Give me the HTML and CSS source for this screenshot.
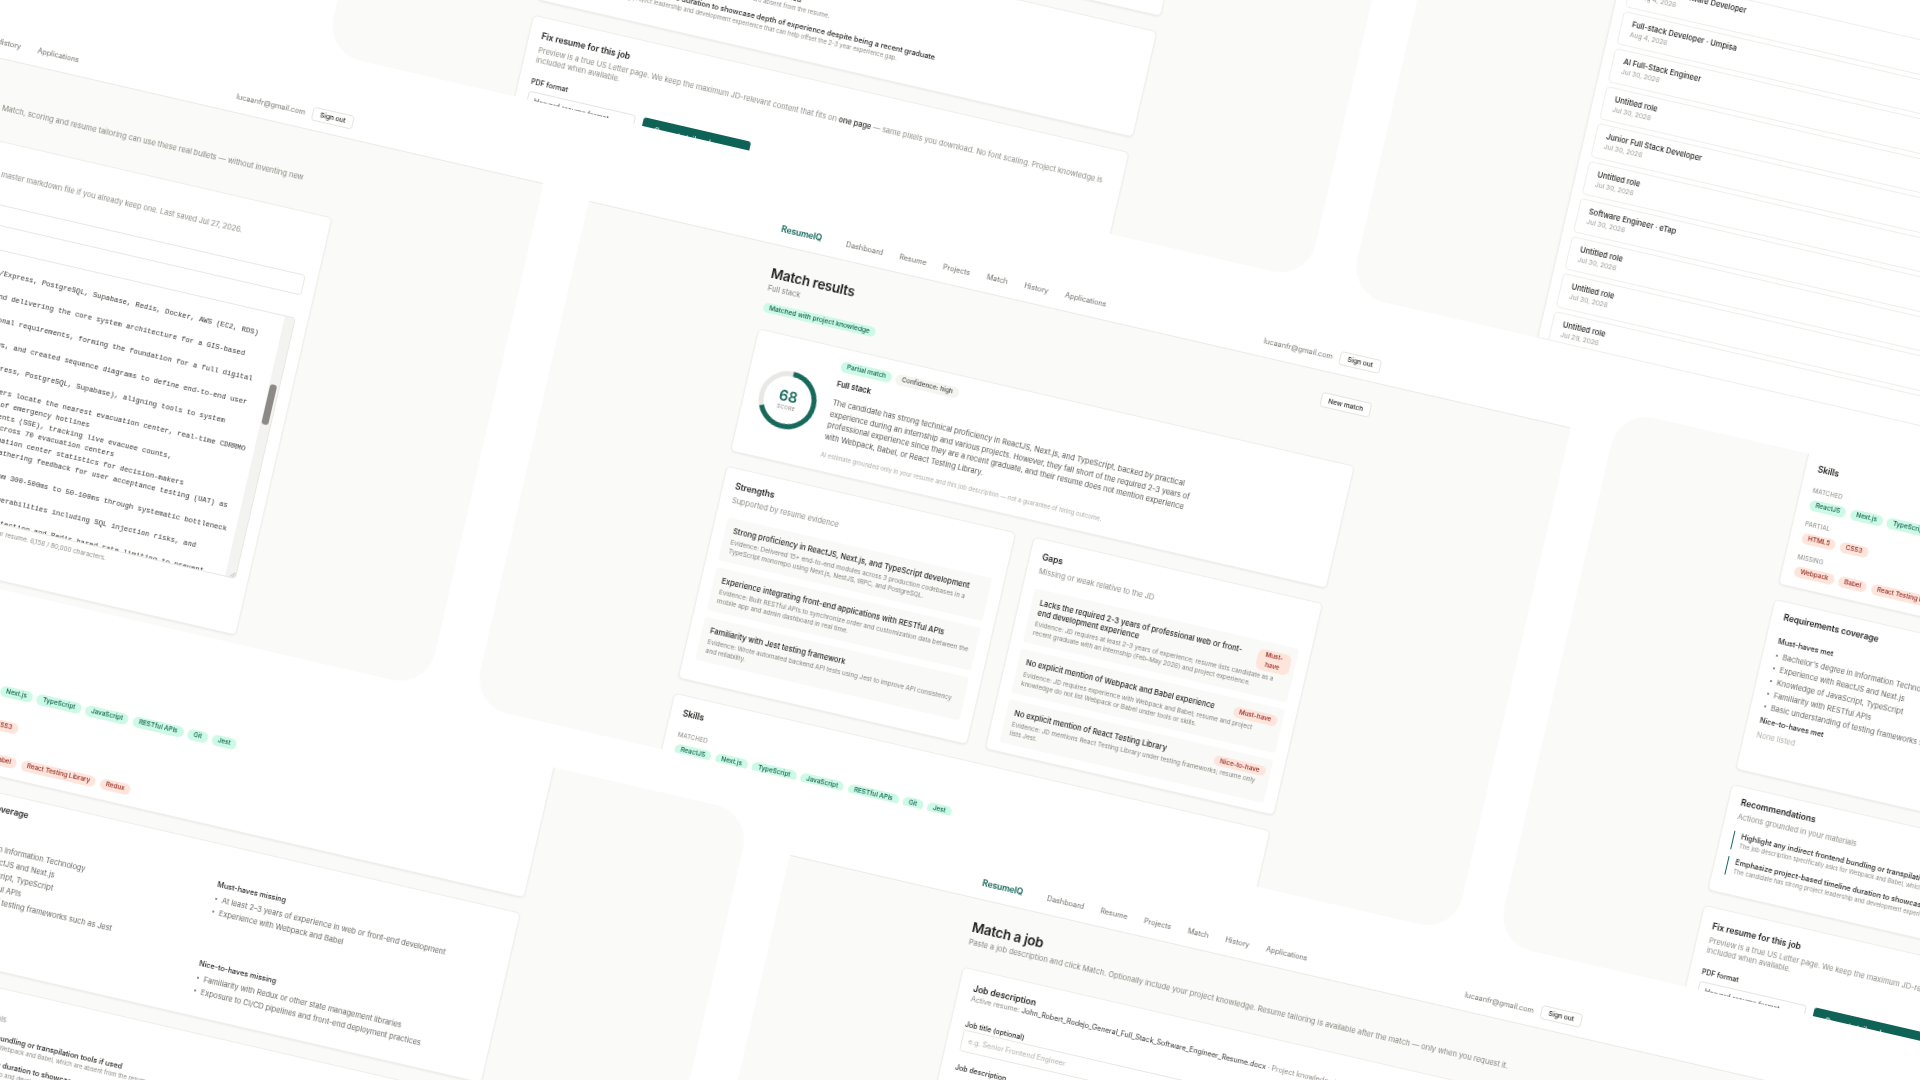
FILE: index.html
```html
<!DOCTYPE html>
<html lang="en">
<head>
  <meta charset="UTF-8">
  <meta name="viewport" content="width=device-width, initial-scale=1.0">
  <title>ResumeIQ</title>
  <link rel="stylesheet" href="styles.css">
</head>
<body>
  <div class="stage">

    <!-- Match results, top of page -->
    <section class="tile tile-center">
      <header class="topbar">
        <div class="container topbar-row">
          <span class="logo">ResumeIQ</span>
          <nav class="nav"><a>Dashboard</a><a>Resume</a><a>Projects</a><a>Match</a><a>History</a><a>Applications</a></nav>
          <span class="email">lucaanfr@gmail.com</span>
          <button class="btn">Sign out</button>
        </div>
      </header>
      <main class="container page" id="match-page">
        <div class="page-head">
          <div>
            <h1>Match results</h1>
            <p class="sub">Full stack</p>
            <span class="pill pill-green pill-wide">Matched with project knowledge</span>
          </div>
          <button class="btn btn-new">New match</button>
        </div>

        <div class="card score-card">
          <div class="ring">
            <svg width="59" height="59" viewBox="0 0 59 59">
              <circle cx="29.5" cy="29.5" r="26.5" fill="none" stroke="#e8e8e6" stroke-width="5"/>
              <circle cx="29.5" cy="29.5" r="26.5" fill="none" stroke="#17695c" stroke-width="5" stroke-dasharray="113.2 166.5" transform="rotate(-90 29.5 29.5)"/>
            </svg>
            <div class="ring-label"><strong>68</strong><span>SCORE</span></div>
          </div>
          <div class="score-body">
            <div class="pill-row">
              <span class="pill pill-green">Partial match</span>
              <span class="pill pill-gray">Confidence: high</span>
            </div>
            <h3 class="score-role">Full stack</h3>
            <p class="summary">The candidate has strong technical proficiency in ReactJS, Next.js, and TypeScript, backed by practical experience during an internship and various projects. However, they fall short of the required 2-3 years of professional experience since they are a recent graduate, and their resume does not mention experience with Webpack, Babel, or React Testing Library.</p>
            <p class="disclaimer">AI estimate grounded only in your resume and this job description — not a guarantee of hiring outcome.</p>
          </div>
        </div>

        <div class="two-col">
          <div class="card col-card">
            <h2>Strengths</h2>
            <p class="card-sub">Supported by resume evidence</p>
            <div class="items">
              <div class="item">
                <div class="item-head"><h4>Strong proficiency in ReactJS, Next.js, and TypeScript development</h4></div>
                <p>Evidence: Delivered 15+ end-to-end modules across 3 production codebases in a TypeScript monorepo using Next.js, NestJS, tRPC, and PostgreSQL.</p>
              </div>
              <div class="item">
                <div class="item-head"><h4>Experience integrating front-end applications with RESTful APIs</h4></div>
                <p>Evidence: Built RESTful APIs to synchronize order and customization data between the mobile app and admin dashboard in real time.</p>
              </div>
              <div class="item">
                <div class="item-head"><h4>Familiarity with Jest testing framework</h4></div>
                <p>Evidence: Wrote automated backend API tests using Jest to improve API consistency and reliability.</p>
              </div>
            </div>
          </div>
          <div class="card col-card">
            <h2>Gaps</h2>
            <p class="card-sub">Missing or weak relative to the JD</p>
            <div class="items">
              <div class="item">
                <div class="item-head">
                  <h4>Lacks the required 2-3 years of professional web or front-end development experience</h4>
                  <span class="pill pill-red pill-wrap">Must-have</span>
                </div>
                <p>Evidence: JD requires at least 2–3 years of experience; resume lists candidate as a recent graduate with an internship (Feb–May 2026) and project experience.</p>
              </div>
              <div class="item">
                <div class="item-head">
                  <h4>No explicit mention of Webpack and Babel experience</h4>
                  <span class="pill pill-red">Must-have</span>
                </div>
                <p>Evidence: JD requires experience with Webpack and Babel; resume and project knowledge do not list Webpack or Babel under tools or skills.</p>
              </div>
              <div class="item">
                <div class="item-head">
                  <h4>No explicit mention of React Testing Library</h4>
                  <span class="pill pill-red">Nice-to-have</span>
                </div>
                <p>Evidence: JD mentions React Testing Library under testing frameworks; resume only lists Jest.</p>
              </div>
            </div>
          </div>
        </div>

        <div class="card skills-card">
          <h2>Skills</h2>
          <div class="skill-label">MATCHED</div>
          <div class="pill-row">
            <span class="pill pill-green">ReactJS</span><span class="pill pill-green">Next.js</span><span class="pill pill-green">TypeScript</span><span class="pill pill-green">JavaScript</span><span class="pill pill-green">RESTful APIs</span><span class="pill pill-green">Git</span><span class="pill pill-green">Jest</span>
          </div>
          <div class="skill-label">PARTIAL</div>
          <div class="pill-row">
            <span class="pill pill-red">HTML5</span><span class="pill pill-red">CSS3</span>
          </div>
          <div class="skill-label">MISSING</div>
          <div class="pill-row">
            <span class="pill pill-red">Webpack</span><span class="pill pill-red">Babel</span><span class="pill pill-red">React Testing Library</span><span class="pill pill-red">Redux</span>
          </div>
        </div>

        <div class="card req-card">
          <h2>Requirements coverage</h2>
          <div class="req-grid">
            <div>
              <h4>Must-haves met</h4>
              <ul>
                <li>Bachelor's degree in Information Technology</li>
                <li>Experience with ReactJS and Next.js</li>
                <li>Knowledge of JavaScript, TypeScript</li>
                <li>Familiarity with RESTful APIs</li>
                <li>Basic understanding of testing frameworks such as Jest</li>
              </ul>
            </div>
            <div>
              <h4>Must-haves missing</h4>
              <ul>
                <li>At least 2–3 years of experience in web or front-end development</li>
                <li>Experience with Webpack and Babel</li>
              </ul>
            </div>
            <div>
              <h4>Nice-to-haves met</h4>
              <p class="none">None listed</p>
            </div>
            <div>
              <h4>Nice-to-haves missing</h4>
              <ul>
                <li>Familiarity with Redux or other state management libraries</li>
                <li>Exposure to CI/CD pipelines and front-end deployment practices</li>
              </ul>
            </div>
          </div>
        </div>

        <div class="card rec-card">
          <h2>Recommendations</h2>
          <p class="card-sub">Actions grounded in your materials</p>
          <div class="rec">
            <h4>Highlight any indirect frontend bundling or transpilation tools if used</h4>
            <p>The job description specifically asks for Webpack and Babel, which are absent from the resume.</p>
          </div>
          <div class="rec">
            <h4>Emphasize project-based timeline duration to showcase depth of experience despite being a recent graduate</h4>
            <p>The candidate has strong project leadership and development experience that can help offset the 2-3 year experience gap.</p>
          </div>
        </div>

        <div class="card fix-card">
          <h2>Fix resume for this job</h2>
          <p class="card-sub fix-desc">Preview is a true US Letter page. We keep the maximum JD-relevant content that fits on <b>one page</b> — same pixels you download. No font scaling. Project knowledge is included when available.</p>
          <label class="field-label fix-label">PDF format</label>
          <div class="fix-row">
            <div class="select">Harvard resume format
              <svg width="6" height="6" viewBox="0 0 6 6"><path d="M1 2l2 2 2-2" fill="none" stroke="#555" stroke-width=".8"/></svg>
            </div>
            <button class="btn-primary">Generate tailored resume</button>
          </div>
        </div>
      </main>
    </section>

    <!-- same page, scrolled down -->
    <section class="tile tile-scrolled tile-top" data-copy></section>
    <section class="tile tile-scrolled tile-right" data-copy></section>
    <section class="tile tile-scrolled tile-lower-left" data-copy></section>

    <!-- Resume -->
    <section class="tile tile-left">
      <header class="topbar">
        <div class="container topbar-row">
          <span class="logo">ResumeIQ</span>
          <nav class="nav"><a>Dashboard</a><a>Resume</a><a>Projects</a><a>Match</a><a>History</a><a>Applications</a></nav>
          <span class="email">lucaanfr@gmail.com</span>
          <button class="btn">Sign out</button>
        </div>
      </header>
      <main class="container page">
        <h1>Resume</h1>
        <p class="sub resume-sub">Keep your full work history, projects and wins in one place so when you run Match, scoring and resume tailoring can use these real bullets — without inventing new experience.</p>
        <div class="card resume-card">
          <h2>Master resume</h2>
          <p class="card-sub">Paste your full resume as plain text below, or upload it. You can also paste a master markdown file if you already keep one. Last saved Jul 27, 2026.</p>
          <div class="input input-name"></div>
          <div class="editor">
<pre class="editor-text">

Tech Stack: TypeScript, JavaScript, Next.js, React, NestJS, Node/Express, PostgreSQL, Supabase, Redis, Docker, AWS (EC2, RDS)

Led the technical direction of a capstone team, while designing and delivering the core system architecture for a GIS-based

Conducted stakeholder interviews to gather and document the functional requirements, forming the foundation for a full digital

Designed the database schemas, mapped the use cases and process flows, and created sequence diagrams to define end-to-end user

Selected the technology stack (TypeScript, Next.js, NestJS, Node, Express, PostgreSQL, Supabase), aligning tools to system

Built location-based features with Mapbox, helping residents and officers locate the nearest evacuation center, real-time CDRRMO
alerts, and a searchable directory that lists the many different types of emergency hotlines
Implemented a live, real-time monitoring dashboard using Server-Sent Events (SSE), tracking live evacuee counts,
supply levels, resident check-ins, and the capacity usage in real time across 70 evacuation centers
Created an analytics page with charts that visualize population and evacuation center statistics for decision-makers
Demonstrated working builds to the barangay officials each sprint while gathering feedback for user acceptance testing (UAT) as

Reduced the average response time of the heaviest API endpoints by far, from 300-500ms to 50-100ms through systematic bottleneck

Performed a full security audit of the platform and remediated critical vulnerabilities including SQL injection risks, and

Added server input validation, parameterized queries, strict CSRF and XSS protection and Redis-based rate limiting to prevent</pre>
            <div class="scrollbar"><div class="thumb"></div></div>
            <svg class="grip" width="6" height="6" viewBox="0 0 6 6"><path d="M1 5.5L5.5 1M3.5 5.5L5.5 3.5" stroke="#888" stroke-width=".6"/></svg>
          </div>
          <p class="hint">Everything saved here is the source of truth for matching and tailoring, and nothing is invented beyond what is in your resume. 6,156 / 80,000 characters.</p>
        </div>
      </main>
    </section>

    <!-- Match a job -->
    <section class="tile tile-lower">
      <header class="topbar">
        <div class="container topbar-row">
          <span class="logo">ResumeIQ</span>
          <nav class="nav"><a>Dashboard</a><a>Resume</a><a>Projects</a><a>Match</a><a>History</a><a>Applications</a></nav>
          <span class="email">lucaanfr@gmail.com</span>
          <button class="btn">Sign out</button>
        </div>
      </header>
      <main class="container page">
        <h1>Match a job</h1>
        <p class="sub">Paste a job description and click Match. Optionally include your project knowledge. Resume tailoring is available after the match — only when you request it.</p>
        <div class="card job-card">
          <h2>Job description</h2>
          <p class="active-resume">Active resume: <span>John_Robert_Rodejo_General_Full_Stack_Software_Engineer_Resume.docx</span> · Project knowledge included</p>
          <label class="field-label job-label">Job title (optional)</label>
          <div class="input job-input">e.g. Senior Frontend Engineer</div>
          <label class="field-label">Job description</label>
        </div>
      </main>
    </section>

    <!-- History -->
    <section class="tile tile-history">
      <div class="card history-card">
        <div class="history-row"><b>Associate Software Developer</b><span>Aug 4, 2026</span></div>
        <div class="history-row"><b>Full-stack Developer · Umpisa</b><span>Aug 4, 2026</span></div>
        <div class="history-row"><b>AI Full-Stack Engineer</b><span>Jul 30, 2026</span></div>
        <div class="history-row"><b>Untitled role</b><span>Jul 30, 2026</span></div>
        <div class="history-row"><b>Junior Full Stack Developer</b><span>Jul 30, 2026</span></div>
        <div class="history-row"><b>Untitled role</b><span>Jul 30, 2026</span></div>
        <div class="history-row"><b>Software Engineer · eTap</b><span>Jul 30, 2026</span></div>
        <div class="history-row"><b>Untitled role</b><span>Jul 30, 2026</span></div>
        <div class="history-row"><b>Untitled role</b><span>Jul 30, 2026</span></div>
        <div class="history-row"><b>Untitled role</b><span>Jul 29, 2026</span></div>
      </div>
    </section>
  </div>

  <script src="script.js"></script>
</body>
</html>
```

FILE: styles.css
```css
* {
  box-sizing: border-box;
}

html, body {
  margin: 0;
  height: 100%;
}

body {
  width: 1920px;
  height: 1080px;
  overflow: hidden;
  position: relative;
  background-color: #fff;
  font-family: Inter, "Liberation Sans", sans-serif;
  color: #1c1c1a;
}

h1, h2, h3, h4, p, ul {
  margin: 0;
  padding: 0;
}

button {
  font-family: inherit;
}

/* the whole collage is one tilted canvas, origin at the middle of the window */
.stage {
  position: absolute;
  left: 960px;
  top: 540px;
  width: 0;
  height: 0;
  transform: rotate(13deg);
  filter: blur(0.3px);
}

.tile {
  position: absolute;
  width: 1008px;
  height: 547px;
  overflow: hidden;
  border-radius: 36px;
  background-color: #fafaf8;
}

.tile-center { left: -438px; top: -276px; }
.tile-top { left: -728px; top: -879px; }
.tile-right { left: 613px; top: -275px; }
.tile-lower-left { left: -1150px; top: 313px; }
.tile-left { left: -1494px; top: -283px; }
.tile-lower { left: -95px; top: 316px; }
.tile-history { left: 324px; top: -874px; }

.tile-scrolled .page {
  margin-top: -464px;
}

.topbar {
  height: 30px;
  background-color: #fff;
  border-bottom: 1px solid #eceae5;
}

.container {
  width: 612px;
  margin-left: 194px;
}

.topbar-row {
  height: 100%;
  display: flex;
  align-items: center;
  width: 615px;
  padding-bottom: 3px;
}

.logo {
  font-size: 8.6px;
  font-weight: 600;
  color: #0f6256;
  margin-right: 25px;
  letter-spacing: -0.1px;
}

.nav {
  display: flex;
  gap: 17px;
  font-size: 7.3px;
  color: #6f6e69;
  flex: 1;
}

.email {
  font-size: 7.3px;
  color: #77766f;
  margin-right: 7px;
}

.btn {
  height: 14px;
  width: 42px;
  padding: 0;
  background-color: #fff;
  border: 1px solid #e6e4df;
  border-radius: 3px;
  font-size: 6.6px;
  font-weight: 500;
  color: #262624;
}

.btn-new {
  width: 51px;
  height: 15px;
  margin-top: 1px;
  margin-right: -3px;
}

.page {
  padding-top: 19px;
}

.page-head {
  display: flex;
  justify-content: space-between;
  align-items: flex-start;
  height: 66px;
}

h1 {
  font-size: 13.4px;
  line-height: 18px;
  font-weight: 600;
  letter-spacing: -0.2px;
  color: #1c1c1a;
}

.sub {
  font-size: 7.5px;
  line-height: 11px;
  color: #85847e;
  margin-top: 1px;
}

.pill {
  display: inline-block;
  font-size: 6.4px;
  line-height: 10.5px;
  font-weight: 500;
  padding: 0 6px;
  border-radius: 6px;
  white-space: nowrap;
  flex: none;
}

.pill-wide {
  margin-top: 6px;
  font-size: 6.6px;
  line-height: 10px;
}

.pill-green {
  background-color: #ccfae6;
  color: #0d5c4d;
}

.pill-red {
  background-color: #fde5dc;
  color: #95261f;
}

.pill-gray {
  background-color: #f4f4f1;
  color: #4c4b47;
}

.pill-wrap {
  white-space: normal;
  width: 34px;
  line-height: 9.5px;
  padding: 1px 6px;
  text-align: center;
}

.pill-row {
  display: flex;
  flex-wrap: wrap;
  gap: 4.4px;
}

.card {
  background-color: #fff;
  border: 1px solid #f0eeea;
  border-radius: 5px;
  box-shadow: 0 1px 2px rgba(40, 40, 30, 0.07);
}

.score-card {
  height: 126px;
  display: flex;
  align-items: center;
  gap: 15px;
  padding: 0 14px;
}

.ring {
  position: relative;
  width: 59px;
  height: 59px;
  flex: none;
}

.ring-label {
  position: absolute;
  top: 0;
  left: 0;
  width: 59px;
  height: 59px;
  display: flex;
  flex-direction: column;
  align-items: center;
  justify-content: center;
}

.ring-label strong {
  font-size: 14.5px;
  line-height: 16px;
  font-weight: 600;
  color: #17695c;
}

.ring-label span {
  font-size: 5.2px;
  letter-spacing: 0.2px;
  color: #8e8d87;
}

.score-body {
  width: 372px;
}

.score-role {
  font-size: 7.6px;
  line-height: 11px;
  font-weight: 600;
  margin-top: 7.5px;
}

.summary {
  font-size: 7.4px;
  line-height: 11.6px;
  color: #55544f;
  margin-top: 7.7px;
}

.disclaimer {
  font-size: 5.9px;
  line-height: 9px;
  color: #adaca6;
  margin-top: 7px;
  white-space: nowrap;
}

.two-col {
  display: grid;
  grid-template-columns: 297px 297px;
  gap: 18px;
  margin-top: 15px;
}

.col-card {
  height: 218px;
  padding: 11px 12px;
}

h2 {
  font-size: 8.5px;
  line-height: 12px;
  font-weight: 600;
  color: #1c1c1a;
}

.card-sub {
  font-size: 7.4px;
  line-height: 10px;
  color: #8c8b85;
  margin-top: 4px;
}

.items {
  display: flex;
  flex-direction: column;
  gap: 7px;
  margin-top: 12px;
}

.item {
  background-color: #f9f9f7;
  border-radius: 3px;
  padding: 8px 5.5px 6px 8px;
  min-height: 44px;
}

.item-head {
  display: flex;
  align-items: center;
  justify-content: space-between;
  gap: 8px;
}

.item h4 {
  font-size: 7.5px;
  line-height: 10px;
  font-weight: 500;
  color: #262624;
}

.item p {
  font-size: 6.25px;
  line-height: 9px;
  color: #83827c;
  margin-top: 2px;
}

.skills-card {
  height: 139px;
  padding: 11px 12px;
  margin-top: 15px;
}

.skill-label {
  font-size: 5.9px;
  line-height: 8px;
  letter-spacing: 0.2px;
  color: #85847e;
  margin: 0 0 5px;
}

.skills-card h2 {
  margin-bottom: 12px;
}

.skills-card .pill-row {
  margin-bottom: 10.5px;
}

.req-card {
  height: 175px;
  padding: 9px 12px;
  margin-top: 15px;
}

.req-grid {
  display: grid;
  grid-template-columns: 297px 1fr;
  grid-template-rows: 81.5px auto;
  margin-top: 12.5px;
}

.req-grid h4,
.rec h4 {
  font-size: 7.3px;
  line-height: 11px;
  font-weight: 500;
  color: #262624;
}

.req-grid ul {
  list-style: none;
  margin-top: 3px;
}

.req-grid li {
  position: relative;
  font-size: 7.4px;
  line-height: 13px;
  color: #666560;
  padding-left: 8px;
}

/* small list dot */
.req-grid li::before {
  content: "";
  position: absolute;
  left: 1px;
  top: 5px;
  width: 2.2px;
  height: 2.2px;
  border-radius: 50%;
  background-color: #6b6a65;
}

.none {
  font-size: 7.4px;
  line-height: 13px;
  color: #b0afa9;
  margin-top: 3px;
}

.rec-card {
  height: 109px;
  padding: 9px 12px;
  margin-top: 15px;
}

.rec {
  border-left: 1px solid #17695c;
  padding-left: 7px;
  height: 19px;
  margin-top: 7px;
}

.rec-card .card-sub + .rec {
  margin-top: 9px;
}

.rec h4 {
  line-height: 10px;
}

.rec p {
  font-size: 5.9px;
  line-height: 8px;
  color: #8c8b85;
}

.fix-card {
  height: 130px;
  padding: 12px 12px;
  margin-top: 15px;
}

.fix-desc {
  line-height: 10px;
}

.fix-desc b {
  font-weight: 600;
  color: #44433f;
}

.field-label {
  display: block;
  font-size: 7px;
  line-height: 10px;
  font-weight: 500;
  color: #262624;
}

.fix-label {
  margin-top: 12px;
}

.fix-row {
  display: flex;
  gap: 8px;
  margin-top: 4px;
}

.select {
  width: 110px;
  height: 20px;
  border: 1px solid #e6e4df;
  border-radius: 3px;
  padding: 0 6px;
  font-size: 7px;
  line-height: 18px;
  color: #44433f;
  display: flex;
  align-items: center;
  justify-content: space-between;
}

.btn-primary {
  width: 110px;
  height: 20px;
  border: 0;
  padding: 0;
  border-radius: 3px;
  background-color: #0f6256;
  color: #eafbf5;
  font-size: 7px;
  font-weight: 500;
}

.input {
  border: 1px solid #e9e7e2;
  border-radius: 3px;
  background-color: #fff;
}

.resume-sub {
  margin-top: 4.5px;
}

.resume-card {
  height: 429px;
  padding: 11px 12px;
  margin: 16.5px -4px 0 4px;
}

.input-name {
  height: 21px;
  margin-top: 24px;
}

.editor {
  position: relative;
  height: 268px;
  margin-top: 23px;
  border: 1px solid #e9e7e2;
  border-radius: 3px;
  overflow: hidden;
}

.editor-text {
  margin: 0;
  padding: 5px 0 0 7px;
  height: 100%;
  overflow: hidden;
  font-family: "Liberation Mono", monospace;
  font-size: 7.27px;
  line-height: 11.65px;
  color: #33322f;
}

.scrollbar {
  position: absolute;
  top: 0;
  right: 0;
  bottom: 0;
  width: 10px;
  background-color: #f3f3f1;
}

.thumb {
  position: absolute;
  top: 69px;
  left: 1px;
  width: 7px;
  height: 41px;
  border-radius: 3px;
  background-color: #8b8a86;
}

.grip {
  position: absolute;
  right: 0;
  bottom: 0;
}

.hint {
  font-size: 6.3px;
  line-height: 9px;
  color: #8c8b85;
  margin-top: 5px;
  white-space: nowrap;
}

.job-card {
  height: 300px;
  padding: 12px 14px;
  margin-top: 20px;
}

.active-resume {
  font-size: 7.1px;
  line-height: 10px;
  color: #8c8b85;
  white-space: nowrap;
}

.active-resume span {
  color: #33322f;
}

.job-label {
  margin-top: 15.7px;
}

.job-input {
  height: 22px;
  margin: 0 0 12px;
  padding: 0 6px;
  font-size: 7.1px;
  line-height: 20px;
  color: #b0afa9;
}

.history-card {
  height: 100%;
  width: 612px;
  margin-left: 193px;
  padding: 0 10px;
  display: flex;
  flex-direction: column;
  justify-content: flex-end;
  gap: 4px;
  border-radius: 0;
}

.history-row {
  flex: none;
  height: 34.5px;
  border: 1px solid #f0eeea;
  border-radius: 4px;
  padding: 5px 10px 0;
  position: relative;
  top: 5px;
}

.history-row b {
  display: block;
  font-size: 7.5px;
  line-height: 11px;
  font-weight: 500;
  color: #262624;
}

.history-row span {
  display: block;
  font-size: 6.6px;
  line-height: 10px;
  color: #9a9993;
}
```

FILE: script.js
```js
// the other tiles show the same results page, further down
const matchPage = document.querySelector('#match-page');

document.querySelectorAll('[data-copy]').forEach((tile) => {
  const copy = matchPage.cloneNode(true);
  copy.removeAttribute('id');
  tile.appendChild(copy);
});
```
